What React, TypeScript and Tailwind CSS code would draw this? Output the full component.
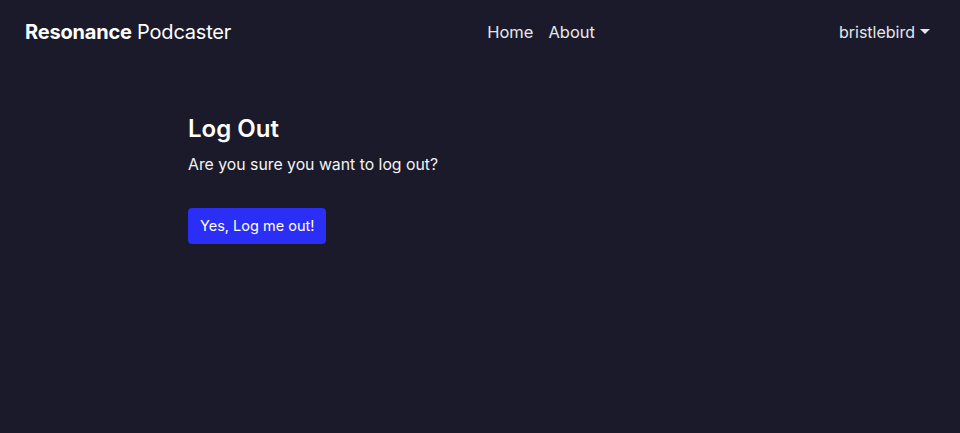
import React from "react";

const NavBar: React.FC = () => {
  return (
    <nav className="flex h-16 items-center justify-between px-[25px]">
      <a href="#" className="text-[20px] text-white tracking-[-0.2px]">
        <span className="font-bold">Resonance</span> Podcaster
      </a>
      <div className="ml-[12px] flex items-center gap-[15px] text-[16.5px] text-gray-200">
        <a href="#">Home</a>
        <a href="#">About</a>
      </div>
      <button className="flex items-center gap-[5px] pr-[5px] text-[16px] text-gray-200">
        bristlebird
        <span className="mb-[2px] inline-block h-0 w-0 border-x-[5px] border-t-[5px] border-x-transparent border-t-gray-200" />
      </button>
    </nav>
  );
};

const App: React.FC = () => {
  return (
    <div
      className="min-h-[433px] bg-[#1b1a2a] text-white"
      style={{ fontFamily: "Inter, 'Noto Sans', sans-serif" }}
    >
      <NavBar />
      <main className="mx-auto w-[584px] pt-[49px]">
        <h1 className="text-[24px] font-semibold leading-8">Log Out</h1>
        <p className="mt-[8px] text-[15.8px] text-gray-100">Are you sure you want to log out?</p>
        <button className="mt-[31px] h-[36px] rounded-[4px] bg-[#2b2ef4] px-3 text-[14.5px] text-white">
          Yes, Log me out!
        </button>
      </main>
    </div>
  );
};

export default App;
